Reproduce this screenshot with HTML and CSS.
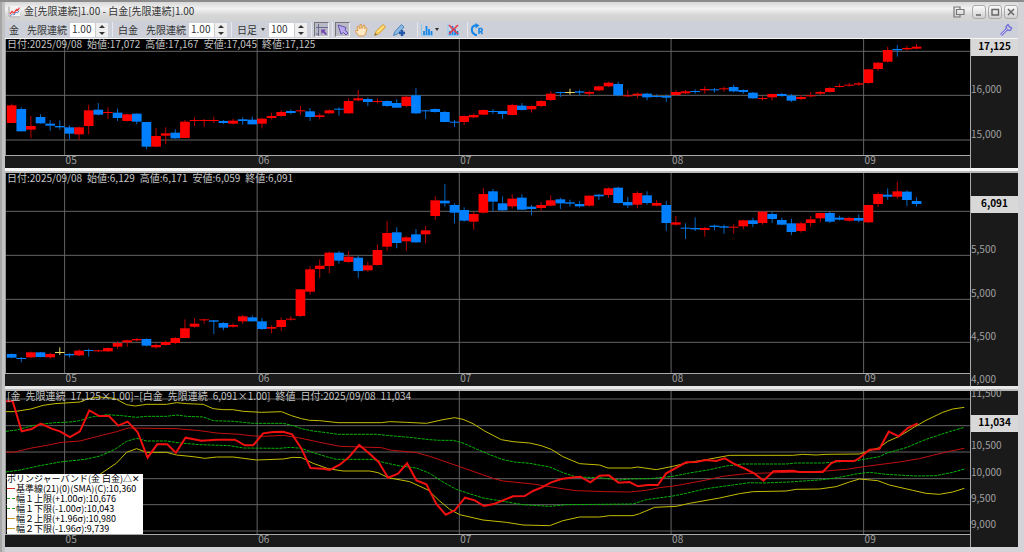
FILE: index.html
```html
<!DOCTYPE html>
<html lang="ja">
<head>
    <meta charset="UTF-8">
    <meta name="viewport" content="width=device-width, initial-scale=1.0">
    <title>金[先限連続]1.00 - 白金[先限連続]1.00</title>
    <link rel="stylesheet" href="styles.css">
</head>
<body>
    <div class="window">
        <header class="title-bar">
            <svg class="app-icon" viewBox="0 0 12 12">
                <path d="M1 0.5V11H12" fill="none" stroke="#999"/>
                <path d="M2 8L4 5.500L6 7L8.500 3.500L9.500 4.500L11.500 1.500" fill="none" stroke="#e44" stroke-width="1.300"/>
                <path d="M2 10L4.500 8L6 9L8 6L9.500 7L11 4.500" fill="none" stroke="#68c" stroke-width="1"/>
            </svg>
            <h1>金[先限連続]1.00 - 白金[先限連続]1.00</h1>
            <div class="window-buttons">
                <button class="dock" aria-label="ドッキング"><svg viewBox="0 0 12 12"><path d="M7 3V1H1V11H7V9M3.500 3.500H11V8.500H3.500Z" fill="none" stroke="#777" stroke-width="1.200"/></svg></button>
                <button aria-label="最小化"><svg viewBox="0 0 12 12"><path d="M3 9H8" stroke="#666" stroke-width="1.500"/></svg></button>
                <button aria-label="最大化"><svg viewBox="0 0 12 12"><path d="M3 3.500H9.500V9H3Z" fill="none" stroke="#666" stroke-width="1.400"/></svg></button>
                <button aria-label="閉じる"><svg viewBox="0 0 12 12"><path d="M3 3L9 9M9 3L3 9" stroke="#666" stroke-width="1.500"/></svg></button>
            </div>
        </header>

        <div class="toolbar">
            <div class="tool-group gold">
                <span>金</span>
                <label for="ratio1">先限連続</label>
                <div class="number">
                    <input type="text" id="ratio1" value="1.00">
                    <div class="spin"><button aria-label="増やす"></button><button aria-label="減らす"></button></div>
                </div>
            </div>
            <div class="tool-group">
                <span>白金</span>
                <label for="ratio2">先限連続</label>
                <div class="number">
                    <input type="text" id="ratio2" value="1.00">
                    <div class="spin"><button aria-label="増やす"></button><button aria-label="減らす"></button></div>
                </div>
            </div>
            <div class="tool-group period">
                <div class="select">
                    <select aria-label="足種"><option>日足</option><option>週足</option><option>月足</option></select>
                </div>
                <div class="number">
                    <input type="text" aria-label="本数" value="100">
                    <div class="spin"><button aria-label="増やす"></button><button aria-label="減らす"></button></div>
                </div>
            </div>
            <div class="tool-group icons single">
                <button class="tool pressed" aria-label="十字カーソル"><svg viewBox="0 0 14 14"><path d="M3.500 1V13M1 4.500H13M1 11H4" fill="none" stroke="#6a6a90"/><path d="M6 6.500H11L9.500 8L12 11L10.500 12L8 9.500L6.500 11Z" fill="#7548b0"/></svg></button>
            </div>
            <div class="tool-group icons">
                <button class="tool pressed" aria-label="選択"><svg viewBox="0 0 14 14"><path d="M2 2L10 4.500L9 7L12 10L10 12L7.500 9.500L5 11Z" fill="#b9a8ee" stroke="#6655b0"/></svg></button>
                <button class="tool" aria-label="移動"><svg viewBox="0 0 14 14"><path d="M4 12L1.500 8.500L2 7L4 8L3 3.500L4.500 3L6 6L6 1.500H7.500L8 5.500L9.500 2L11 2.500L10.500 6L12 4.500L13 5.500L11.500 11L9.500 13H5.500Z" fill="#ffe9c4" stroke="#d99a4e"/></svg></button>
                <button class="tool" aria-label="鉛筆"><svg viewBox="0 0 14 14"><path d="M1.500 12.500L3 8.500L10 1.500L12.500 4L5.500 11Z" fill="#ffd35a" stroke="#d59a30"/><path d="M1.500 12.500L2.500 10L4 11.500Z" fill="#765"/><path d="M4.500 9L10.500 3" stroke="#fff3b0"/></svg></button>
                <button class="tool" aria-label="ペン"><svg viewBox="0 0 14 14"><path d="M1.500 12.500L3 8.500L9.500 1.500L12 4L5.500 11Z" fill="#8dbbe6" stroke="#4a83bb"/><path d="M10 7V13M7 10H13" stroke="#2358a8" stroke-width="2.500"/></svg></button>
            </div>
            <div class="tool-group icons studies">
                <button class="tool drop" aria-label="指標"><svg viewBox="0 0 14 14"><path d="M1.500 1V12.500H13" fill="none" stroke="#8cc8f5"/><path d="M4 12V8M6.500 12V3M9 12V6M11.500 12V8" stroke="#1687e8" stroke-width="1.800"/></svg></button>
                <button class="tool" aria-label="指標の削除"><svg viewBox="0 0 14 14"><path d="M2 1V12.500H13" fill="none" stroke="#8cc8f5"/><path d="M4 12V8M6.500 12V3M9 12V6M11.500 12V8" stroke="#1687e8" stroke-width="1.800"/><path d="M3 2L12 11M12 2L3 11" stroke="#e33c4c" stroke-width="1.600"/></svg></button>
            </div>
            <div class="tool-group icons">
                <button class="tool" aria-label="更新"><svg viewBox="0 0 14 14"><path d="M7 12H5.500C0.500 10 1 4 4.500 2.500H7" fill="none" stroke="#1687e8" stroke-width="2"/><path d="M5.500 0L9.500 2.500L5.500 5.500Z" fill="#1687e8"/><path d="M9 11V5.500H11.500Q13 7 11.500 8.500H9M11 9L12.500 11" fill="none" stroke="#1687e8" stroke-width="1.500"/></svg></button>
            </div>
            <button class="tool settings" aria-label="設定"><svg viewBox="0 0 14 14"><path d="M2 12L8 6" stroke="#8076dc" stroke-width="3"/><path d="M9 1.500L7 4L8 7L11 7.500L13 5M9 1.500L10.500 4L13 5" fill="none" stroke="#7774d8" stroke-width="1.500"/><path d="M2.500 11.500L8 6" stroke="#ccd0ff"/></svg></button>
        </div>

        <main class="charts">
            <section class="pane pane-gold">
                <div class="plot">
                    <svg id="gold" preserveAspectRatio="none"></svg>
                    <p class="info"><span>日付:2025/09/08</span><span>始値:17,072</span><span>高値:17,167</span><span>安値:17,045</span><span>終値:17,125</span></p>
                </div>
                <div class="time-axis"></div>
                <div class="price-axis"><strong>17,125</strong></div>
            </section>
            <section class="pane pane-platinum">
                <div class="plot">
                    <svg id="platinum" preserveAspectRatio="none"></svg>
                    <p class="info"><span>日付:2025/09/08</span><span>始値:6,129</span><span>高値:6,171</span><span>安値:6,059</span><span>終値:6,091</span></p>
                </div>
                <div class="time-axis"></div>
                <div class="price-axis"><strong>6,091</strong></div>
            </section>
            <section class="pane pane-spread">
                <div class="plot">
                    <svg id="spread" preserveAspectRatio="none"></svg>
                    <p class="info"><span>[金</span><span>先限連続</span><span>17,125×1.00]−[白金</span><span>先限連続</span><span>6,091×1.00]</span><span>終値</span><span>日付:2025/09/08</span><span>11,034</span></p>
                    <div class="legend">
                        <p>ボリンジャーバンド(金 白金)△✕</p>
                        <ul>
                            <li class="base">基準線(21)(0)(SMA)(C):10,360</li>
                            <li class="band1">幅１上限(+1.00σ):10,676</li>
                            <li class="band1">幅１下限(-1.00σ):10,043</li>
                            <li class="band2">幅２上限(+1.96σ):10,980</li>
                            <li class="band2">幅２下限(-1.96σ):9,739</li>
                        </ul>
                    </div>
                </div>
                <div class="time-axis"></div>
                <div class="price-axis"><strong>11,034</strong></div>
            </section>
        </main>
    </div>
    <script src="script.js"></script>
</body>
</html>
```
FILE: styles.css
```css
* {
    box-sizing: border-box;
}

body {
    margin: 0;
    background: #8c8c8c;
    font-family: "Liberation Sans Narrow", "Noto Sans CJK JP", sans-serif;
    font-size: 10px;
    color: #333;
}

h1, p, ul {
    margin: 0;
    padding: 0;
    font-weight: normal;
}

button, input, select {
    font: inherit;
    color: inherit;
    margin: 0;
    padding: 0;
    border: 0;
    background: none;
}

.window {
    display: flex;
    flex-direction: column;
    height: 100vh;
    min-height: 360px;
    padding: 0 6px 5px 5px;
    background: linear-gradient(to right, #a6a6a6 2px, #c2c2c2 2px, #c2c2c2 5px, #d4d4d8 5px);
    border-top: 2px solid #8c8c8c;
}

/* title bar */

.title-bar {
    display: flex;
    align-items: center;
    flex: 0 0 19px;
    padding-left: 3px;
    background: linear-gradient(#d8d8d8, #f2f2f2 35%, #d6d6d6 70%, #d2d2d2);
}

.app-icon {
    width: 12px;
    height: 12px;
    margin-right: 4px;
    background: #f4f4f4;
}

.title-bar h1 {
    padding-bottom: 2px;
    font-size: 10px;
}

.window-buttons {
    display: flex;
    align-items: center;
    gap: 2px;
    margin-left: auto;
}

.window-buttons button {
    display: flex;
    width: 14px;
    height: 14px;
    background: linear-gradient(#fafafa, #d0d0d0);
    border: 1px solid #aaa;
    border-radius: 3px;
}

.window-buttons .dock {
    margin-right: 4px;
    padding: 1px;
    background: none;
    border: 0;
}

/* toolbar */

.toolbar {
    display: flex;
    align-items: center;
    flex: 0 0 17px;
    background: #cdd0d9;
}

.tool-group {
    display: flex;
    align-items: center;
    padding: 0 4px 0 5px;
    border-left: 1px solid #e8e8ec;
}

.tool-group.gold {
    padding-left: 4px;
    border: 0;
}

.tool-group span,
.tool-group label {
    width: 43px;
}

.tool-group span {
    width: 28px;
}

.tool-group.gold span {
    width: 18px;
}

.number {
    display: flex;
    height: 14px;
    background: #fff;
}

.number input {
    width: 26px;
    padding: 0 2px 2px;
    border-right: 1px solid #ccc;
}

.spin {
    display: flex;
    flex-direction: column;
    width: 12px;
}

.spin button {
    flex: 1;
    display: flex;
    align-items: center;
    justify-content: center;
    background: #eee;
}

.spin button::before {
    content: "";
    border: 3px solid transparent;
    border-top: 0;
    border-bottom-color: #333;
}

.spin button + button::before {
    border-top: 3px solid #333;
    border-bottom: 0;
}

.select {
    position: relative;
    width: 32px;
}

.select select {
    width: 100%;
    appearance: none;
}

.select::after,
.drop::after {
    content: "";
    flex: none;
    border: 2px solid transparent;
    border-top: 3px solid #333;
    border-bottom: 0;
}

.select::after {
    position: absolute;
    right: 4px;
    top: 6px;
}

.icons {
    gap: 4px;
    padding: 0 10px 0 2px;
}

.icons.single {
    padding-right: 3px;
}

.icons.studies {
    gap: 6px;
    padding-right: 6px;
}

.tool {
    display: flex;
    align-items: center;
    width: 15px;
    height: 15px;
}

.tool svg {
    flex: none;
    width: 14px;
    height: 14px;
}

.tool.pressed {
    background: #b9bac6;
    border: 1px solid;
    border-color: #777 #eee #eee #777;
}

.tool.drop {
    width: 20px;
    gap: 1px;
}

.tool.settings {
    margin-left: auto;
    margin-right: 4px;
}

/* charts */

.charts {
    flex: 1;
    display: flex;
    flex-direction: column;
    gap: 5px;
    min-height: 0;
    border-top: 1px solid #f4f4f4;
    background: linear-gradient(#fff, #ddd);
}

.pane {
    display: grid;
    grid-template-columns: minmax(0, 1fr) 48px;
    grid-template-rows: minmax(0, 1fr) 13px;
    min-height: 0;
    background: #1a1a1a;
    color: #a0a0a0;
    line-height: 10px;
}

.pane-gold {
    flex: 129 1 0;
}

.pane-platinum {
    flex: 213 1 0;
}

.pane-spread {
    flex: 156 1 0;
}

.pane + .pane {
    box-shadow: 0 -2px #bbb;
}

.plot {
    position: relative;
    background: #000;
    border-left: 1px solid #999;
}

.plot svg {
    position: absolute;
    width: 100%;
    height: 100%;
}

.info {
    position: relative;
    display: flex;
    gap: 5px;
    padding-left: 1px;
    color: #c4c4c4;
    white-space: nowrap;
}

.time-axis {
    grid-row: 2;
    position: relative;
    border-top: 1px solid #aaa;
    line-height: 8px;
}

.time-axis span {
    position: absolute;
    padding-left: 1px;
}

.price-axis {
    grid-column: 2;
    grid-row: 1 / 3;
    position: relative;
    border-left: 1px solid #aaa;
}

.price-axis span {
    position: absolute;
}

.price-axis strong {
    position: absolute;
    left: 0;
    right: 0;
    padding-bottom: 3px;
    background: #d8d8d8;
    color: #000;
    line-height: 14px;
    text-align: center;
}

.legend {
    position: absolute;
    left: 1px;
    bottom: 0;
    width: 136px;
    padding-bottom: 1px;
    background: #fff;
    color: #000;
    font-size: 9px;
    line-height: 9px;
    white-space: nowrap;
}

.legend ul {
    list-style: none;
}

.legend li {
    display: flex;
    align-items: center;
    gap: 1px;
    margin-top: 1px;
}

.legend li::before {
    content: "";
    width: 8px;
    border-top: 1px solid #d22;
}

.legend .band1::before {
    border-top: 1px dashed #2a9a2a;
}

.legend .band2::before {
    border-color: #c8a020;
}

/* series */

.grid {
    stroke: #646464;
}

.up {
    fill: #f00;
    stroke: #c00000;
}

.down {
    fill: #0080ff;
    stroke: #0068c8;
}

.flat {
    fill: #e8d860;
    stroke: #e8d860;
}

.up rect, .down rect, .flat rect {
    stroke: none;
}

.line {
    fill: none;
    stroke: #f01010;
    stroke-width: 2px;
}

.base-line {
    fill: none;
    stroke: #c01010;
    stroke-width: 1px;
}

.band1-line {
    fill: none;
    stroke: #00b800;
    stroke-dasharray: 3 1;
}

.band2-line {
    fill: none;
    stroke: #c4bc00;
}
```
FILE: script.js
```js
const LEFT = 18, RIGHT = 2912;
const FIRST = 35, STEP = 28.9;

const months = [["05", 6], ["06", 26], ["07", 47], ["08", 69], ["09", 89]];

// one candle each: colour (r up, b down, y flat), high, body top, body bottom, low
const gold = `r131,136,189,189 b142,147,214,214 r168,198,209,235 b163,171,190,191 b180,191,197,212
b181,198,202,209 b196,202,221,238 r200,202,223,240 r134,151,198,223 b129,149,164,166
r142,156,159,177 b146,158,174,183 r161,163,183,184 b160,161,185,193 b186,186,260,268
r204,228,260,262 r202,220,227,252 b208,218,235,236 r180,185,234,234 r172,180,183,198
r177,180,183,200 r170,180,183,189 b180,183,189,192 r176,182,191,193 b172,178,183,194
b170,179,193,193 r174,176,191,205 r158,168,174,178 r150,156,168,170 b148,153,159,163
r138,151,154,165 b144,154,171,183 r160,166,171,178 r148,151,160,161 b142,146,149,167
r115,123,160,162 r90,115,121,123 b113,117,126,138 r115,123,126,130 b121,123,138,141
b118,129,143,144 r108,110,138,142 b84,106,160,162 b150,151,154,177 b145,147,156,158
b153,156,186,187 b180,185,188,201 r166,168,186,195 r160,165,172,174 r148,150,164,166
b147,153,156,162 b152,153,162,177 r131,135,165,166 b129,137,150,151 r136,138,148,158
r120,123,138,142 r94,101,120,123 b95,96,99,111 y86,96,99,104 b90,94,98,107
r93,96,101,110 r77,79,91,94 r65,68,79,81 b65,72,106,109 r91,106,109,111
r98,101,106,115 b98,101,112,121 b103,108,111,112 b103,108,113,126 r91,96,105,107
r90,94,100,102 b88,93,96,101 r79,87,91,101 b84,88,91,98 r80,85,88,95
b74,81,94,97 b88,90,96,101 b96,98,115,116 r109,114,117,122 r101,102,112,122
b99,102,108,110 b102,107,122,126 r105,111,117,120 r96,106,109,112 r93,96,101,105
r81,84,96,98 r71,78,81,82 r69,74,77,80 r66,70,74,77 r26,28,69,72
r6,8,27,33 r-40,-30,5,8 b-45,-33,-29,-10 r-43,-36,-32,-28 r-48,-40,-34,-32`;

const platinum = `b565,567,578,580 b576,579,582,592 r560,562,577,580 b561,562,576,577 r564,567,577,580
y547,561,564,570 b565,567,571,578 r553,557,571,574 b551,555,558,575 r554,556,559,562
r547,549,559,561 r529,534,545,551 r524,526,532,545 r519,522,526,530 b520,522,542,544
r535,540,547,550 r527,531,540,542 r516,519,534,537 r463,490,519,519 r459,476,485,488
r461,463,466,476 b465,466,470,507 b471,474,488,496 r475,480,485,488 r450,454,469,476
b452,457,469,470 b459,469,492,495 r481,486,491,505 r457,465,486,498 r453,461,464,467
r372,373,453,456 r303,313,380,389 r283,302,312,339 r260,263,303,325 b258,263,287,296
r258,275,291,293 b272,278,318,339 r290,301,316,320 r239,255,300,302 r168,204,245,257
b187,202,234,250 r214,217,229,257 b192,208,232,233 r183,196,208,235 r94,106,153,165
b57,107,115,125 b115,120,143,175 b127,135,167,170 r140,147,170,194 r69,87,143,146
b72,79,110,140 b94,115,136,137 r88,101,124,131 b88,98,134,135 b120,125,132,151
r111,120,129,137 r91,106,122,124 b98,103,115,132 b104,112,116,125 b108,117,124,127
r91,92,122,125 b87,89,94,105 r67,70,90,98 b65,68,114,116 b96,111,121,129
r79,84,119,130 b79,91,114,119 r105,114,122,124 b108,120,174,198 r153,172,179,182
b175,188,191,222 b157,189,193,198 r186,189,195,215 b179,182,186,196 b179,184,188,206
r178,185,188,206 r164,166,184,193 b159,166,177,186 r139,140,174,179 b140,147,162,174
b158,165,179,181 b161,175,201,210 r170,175,198,203 r153,163,174,185 r143,144,160,172
b141,144,170,174 b152,158,164,166 r156,159,167,170 b148,159,167,172 r119,120,172,174
r82,87,117,126 b70,89,95,104 r50,79,95,101 b76,80,105,123 b97,108,117,124`;

const spread = {
    "band2-line upper": "18,95 42,95 92,87 130,76 165,71 240,66 265,56 300,51 335,54 350,58 380,74 406,78 440,73 500,73 530,68 560,71 610,73 640,86 670,89 700,89 730,94 785,97 845,95 875,107 905,116 930,121 960,122 1015,128 1145,128 1170,125 1220,127 1280,130 1330,119 1365,113 1390,118 1420,131 1455,153 1505,179 1540,185 1590,189 1625,197 1655,208 1690,230 1740,251 1800,255 1825,264 1895,264 1915,261 1970,269 2020,259 2070,247 2120,239 2190,226 2380,226 2410,223 2450,225 2480,223 2580,222 2620,209 2640,203 2665,184 2700,169 2745,141 2780,121 2830,97 2860,87 2895,82",
    "band1-line upper": "18,154 50,150 90,139 120,133 165,128 210,126 240,122 270,112 320,104 365,107 410,112 440,109 500,109 530,105 560,109 610,111 640,122 700,124 760,130 850,130 880,137 905,146 940,153 980,158 1015,163 1130,163 1170,167 1230,172 1290,179 1320,181 1360,181 1390,189 1430,207 1470,224 1510,239 1545,246 1590,250 1650,261 1690,278 1730,291 1800,293 1830,297 1860,300 1890,297 1950,296 2020,289 2070,279 2125,270 2180,258 2230,252 2360,252 2390,249 2470,249 2510,246 2570,242 2640,230 2660,220 2720,203 2780,178 2850,155 2895,142",
    "base-line": "18,217 45,216 90,205 140,196 185,187 240,183 290,170 350,155 385,144 530,146 600,152 650,159 720,163 750,167 790,169 850,166 900,174 960,187 1020,199 1145,203 1170,210 1250,218 1290,229 1380,260 1480,295 1510,303 1600,312 1700,328 1730,332 1820,335 1890,336 1940,331 1980,323 2030,317 2120,300 2170,289 2240,281 2400,276 2480,273 2540,268 2600,259 2700,246 2760,236 2800,226 2850,214 2895,205",
    "band1-line lower": "18,276 60,270 120,257 180,246 255,238 300,228 345,208 380,184 410,175 440,183 500,183 540,189 600,194 690,197 730,204 840,205 870,202 905,205 940,218 980,230 1010,238 1120,238 1150,247 1200,258 1250,264 1290,280 1330,306 1370,328 1400,338 1450,354 1510,364 1570,374 1650,379 1700,374 1900,372 1940,359 2020,348 2060,340 2120,326 2200,315 2250,308 2290,309 2370,306 2470,299 2520,292 2570,282 2610,277 2660,283 2750,288 2810,287 2860,277 2895,267",
    "band2-line lower": "200,340 270,302 300,283 350,249 380,217 410,206 440,217 500,217 530,225 580,230 615,235 650,231 700,231 770,240 850,237 880,232 905,233 940,250 985,266 1030,273 1110,273 1135,278 1165,293 1230,305 1285,330 1320,363 1350,388 1380,404 1450,420 1520,427 1570,435 1650,437 1690,422 1740,411 1800,411 1830,407 1900,407 1920,401 1965,382 2030,379 2070,370 2160,354 2220,341 2260,335 2360,333 2390,328 2460,327 2510,320 2550,306 2580,297 2635,302 2670,315 2740,331 2780,340 2820,343 2860,336 2895,325",
    "line": "18,64 38,64 65,154 95,147 122,131 155,146 180,154 210,171 240,154 268,91 298,108 327,108 355,137 383,125 413,156 443,233 472,193 502,193 528,218 557,173 605,182 650,179 705,179 735,196 760,196 790,160 820,156 850,155 877,163 905,206 932,264 970,266 990,270 1020,254 1047,232 1078,195 1107,219 1136,245 1165,293 1195,281 1222,250 1250,301 1280,313 1310,372 1338,404 1365,391 1396,353 1425,361 1453,378 1485,371 1540,349 1575,348 1600,333 1625,323 1655,307 1685,297 1712,293 1742,290 1772,307 1800,287 1828,286 1857,308 1890,306 1915,319 1945,315 1975,315 2000,280 2060,247 2090,246 2120,240 2150,243 2176,235 2205,252 2232,264 2264,280 2292,302 2322,274 2380,272 2400,276 2470,276 2495,250 2510,243 2565,243 2580,234 2610,209 2640,207 2668,155 2698,169 2725,144 2755,130"
};

function line(x1, y1, x2, y2, cls) {
    return `<line class="${cls}" x1="${x1}" y1="${y1}" x2="${x2}" y2="${y2}" vector-effect="non-scaling-stroke"/>`;
}

function monthX(index) {
    return FIRST + STEP * (index - 0.5);
}

function drawCandles(text) {
    const names = { r: "up", b: "down", y: "flat" };
    return text.split(/\s+/).map((item, i) => {
        const [high, top, bottom, low] = item.slice(1).split(",").map(Number);
        const x = FIRST + STEP * i;
        return `<g class="${names[item[0]]}">${line(x, high, x, low, "wick")}` +
            `<rect x="${x - 14.5}" y="${top}" width="29" height="${bottom - top}"/></g>`;
    }).join("");
}

function drawLines(series) {
    return Object.keys(series).map(name =>
        `<polyline class="${name}" points="${series[name]}" vector-effect="non-scaling-stroke"/>`
    ).join("");
}

// labels: [text, y]; last: y of the current price badge
function drawPane(id, top, bottom, grid, labels, last, content) {
    const svg = document.getElementById(id);
    const pane = svg.closest(".pane");
    const full = bottom - top + 39;

    svg.setAttribute("viewBox", `${LEFT} ${top} ${RIGHT - LEFT} ${bottom - top}`);
    svg.innerHTML = grid.map(y => line(LEFT, y, RIGHT, y, "grid")).join("") +
        months.map(m => line(monthX(m[1]), top, monthX(m[1]), bottom, "grid")).join("") + content;

    pane.querySelector(".time-axis").innerHTML = months.map(m =>
        `<span style="left: ${(monthX(m[1]) - 15) / (RIGHT - 15) * 100}%">${m[0]}</span>`
    ).join("");

    const axis = pane.querySelector(".price-axis");
    axis.querySelector("strong").style.top = (last - top) / full * 100 + "%";
    labels.forEach(([text, y]) => {
        const span = document.createElement("span");
        span.textContent = text;
        span.style.top = (y - top) / full * 100 + "%";
        axis.appendChild(span);
    });
}

drawPane("gold", -63, 285, [-26, 106, 240], [["16,000", 72], ["15,000", 206]], -63, drawCandles(gold));
drawPane("platinum", 24, 624, [139, 271, 403, 532],
    [["5,500", 237], ["5,000", 368], ["4,500", 497], ["4,000", 628]], 92, drawCandles(platinum));
drawPane("spread", 33, 462, [57, 137, 216, 296, 374, 453],
    [["11,500", 23], ["10,500", 181], ["10,000", 260], ["9,500", 339], ["9,000", 418]], 106, drawLines(spread));
```
